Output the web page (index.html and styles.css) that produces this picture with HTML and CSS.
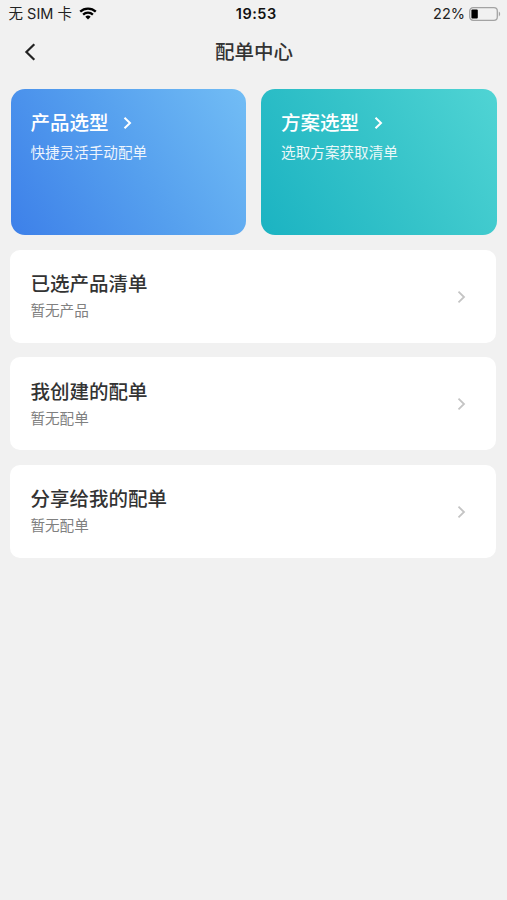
FILE: index.html
```html
<!DOCTYPE html>
<html lang="zh-CN">
<head>
    <meta charset="UTF-8">
    <meta name="viewport" content="width=device-width, initial-scale=1.0">
    <title>配单中心</title>
    <link rel="stylesheet" href="styles.css">
</head>
<body>
    <div class="status-bar">
        <div class="status-left">
            <span class="carrier">无 SIM 卡</span>
            <svg class="wifi" width="18" height="13" viewBox="0 0 18 13">
                <path d="M1.2 4.7a11.2 11.2 0 0 1 15.6 0M4.1 7.6a7.1 7.1 0 0 1 9.8 0" fill="none" stroke="#000" stroke-width="2.3"/>
                <path d="M9 12.4L6.3 9.7a3.9 3.9 0 0 1 5.4 0z"/>
            </svg>
        </div>
        <div class="status-time">19:53</div>
        <div class="status-right">
            <span class="percent">22%</span>
            <svg width="32" height="14" viewBox="0 0 32 14">
                <rect x=".7" y=".7" width="27.6" height="12.6" rx="3.4" fill="none" stroke="#a3a3a3" stroke-width="1.3"/>
                <rect x="2.4" y="2.4" width="6.4" height="9.2" rx="1"/>
                <path d="M29.8 4.6c1.8.7 1.8 4.1 0 4.8z" fill="#a3a3a3"/>
            </svg>
        </div>
    </div>

    <div class="nav-bar">
        <svg class="back" width="12" height="18" viewBox="0 0 12 18">
            <path d="M10.3 1.2L2.4 9l7.9 7.8"/>
        </svg>
        <h1>配单中心</h1>
    </div>

    <div class="content">
        <div class="entry-grid">
            <div class="entry-card product">
                <div class="entry-title">产品选型
                    <svg class="arrow" width="9" height="14" viewBox="0 0 9 14"><path d="M1.5 1.7L7 7l-5.5 5.3"/></svg>
                </div>
                <div class="entry-desc">快捷灵活手动配单</div>
            </div>
            <div class="entry-card solution">
                <div class="entry-title">方案选型
                    <svg class="arrow" width="9" height="14" viewBox="0 0 9 14"><path d="M1.5 1.7L7 7l-5.5 5.3"/></svg>
                </div>
                <div class="entry-desc">选取方案获取清单</div>
            </div>
        </div>

        <div class="list">
            <div class="list-item">
                <div>
                    <div class="item-title">已选产品清单</div>
                    <div class="item-desc">暂无产品</div>
                </div>
                <svg class="arrow" width="9" height="14" viewBox="0 0 9 14"><path d="M1.5 1.7L7 7l-5.5 5.3"/></svg>
            </div>
            <div class="list-item">
                <div>
                    <div class="item-title">我创建的配单</div>
                    <div class="item-desc">暂无配单</div>
                </div>
                <svg class="arrow" width="9" height="14" viewBox="0 0 9 14"><path d="M1.5 1.7L7 7l-5.5 5.3"/></svg>
            </div>
            <div class="list-item">
                <div>
                    <div class="item-title">分享给我的配单</div>
                    <div class="item-desc">暂无配单</div>
                </div>
                <svg class="arrow" width="9" height="14" viewBox="0 0 9 14"><path d="M1.5 1.7L7 7l-5.5 5.3"/></svg>
            </div>
        </div>
    </div>
</body>
</html>
```
FILE: styles.css
```css
* {
    box-sizing: border-box;
}
body {
    margin: 0;
    min-height: 100vh;
    background: #f1f1f1;
    color: #333;
    font-family: Inter, "Noto Sans CJK SC", sans-serif;
}
svg {
    display: block;
    flex: none;
}
.status-bar {
    display: grid;
    grid-template-columns: 1fr auto 1fr;
    align-items: center;
    height: 27px;
    padding: 0 6px 0 8.5px;
    color: #222;
    font-size: 14.5px;
    line-height: 27px;
}
.status-left,
.status-right {
    display: flex;
    align-items: center;
}
.status-left {
    gap: 7px;
}
.wifi {
    margin-bottom: 1px;
}
.status-right {
    justify-content: flex-end;
    gap: 4px;
}
.status-time {
    padding-left: 3px;
    color: #111;
    font-weight: 600;
    letter-spacing: 0.5px;
}
.nav-bar {
    display: grid;
    grid-template-columns: 40px 1fr 40px;
    align-items: center;
    height: 50px;
}
.nav-bar h1 {
    margin: 0;
    padding-left: 1px;
    font-size: 19.5px;
    font-weight: 500;
    line-height: 28px;
    text-align: center;
}
.back {
    justify-self: end;
    margin-right: 4px;
    fill: none;
    stroke: #222;
    stroke-width: 2.2;
}
.content {
    padding: 12px 10px 0;
}
.entry-grid {
    display: grid;
    grid-template-columns: 1fr 1fr;
    gap: 15px;
    margin: 0 0 0 0.6px;
}
.entry-card {
    height: 146.4px;
    padding: 20px 19.8px;
    border-radius: 14px;
    color: #fff;
}
.product {
    background: linear-gradient(58deg, #3d80e9 0%, #559fee 50%, #72bdf5 100%);
}
.solution {
    background: linear-gradient(58deg, #1bb3c2 0%, #35c3c9 50%, #50d4d4 100%);
}
.entry-title {
    display: flex;
    align-items: center;
    gap: 15px;
    font-size: 19.5px;
    font-weight: 500;
    line-height: 29px;
}
.entry-desc {
    margin-top: 4px;
    font-size: 14.6px;
    line-height: 22px;
    opacity: 0.9;
}
.arrow {
    fill: none;
    stroke: #c4c4c4;
    stroke-width: 1.8;
}
.entry-card .arrow {
    margin-bottom: 2px;
    stroke: #fff;
    stroke-width: 2;
}
.list {
    display: grid;
    gap: 14.3px;
    margin: 14.6px 0.6px 0 0.4px;
}
.list-item {
    display: flex;
    align-items: center;
    justify-content: space-between;
    height: 93px;
    padding: 1px 30px 0 20px;
    border-radius: 10px;
    background: #fff;
}
.item-title {
    font-size: 19.5px;
    font-weight: 500;
    line-height: 29px;
}
.item-desc {
    margin-top: 1px;
    color: #808080;
    font-size: 14.6px;
    line-height: 23px;
}
```
